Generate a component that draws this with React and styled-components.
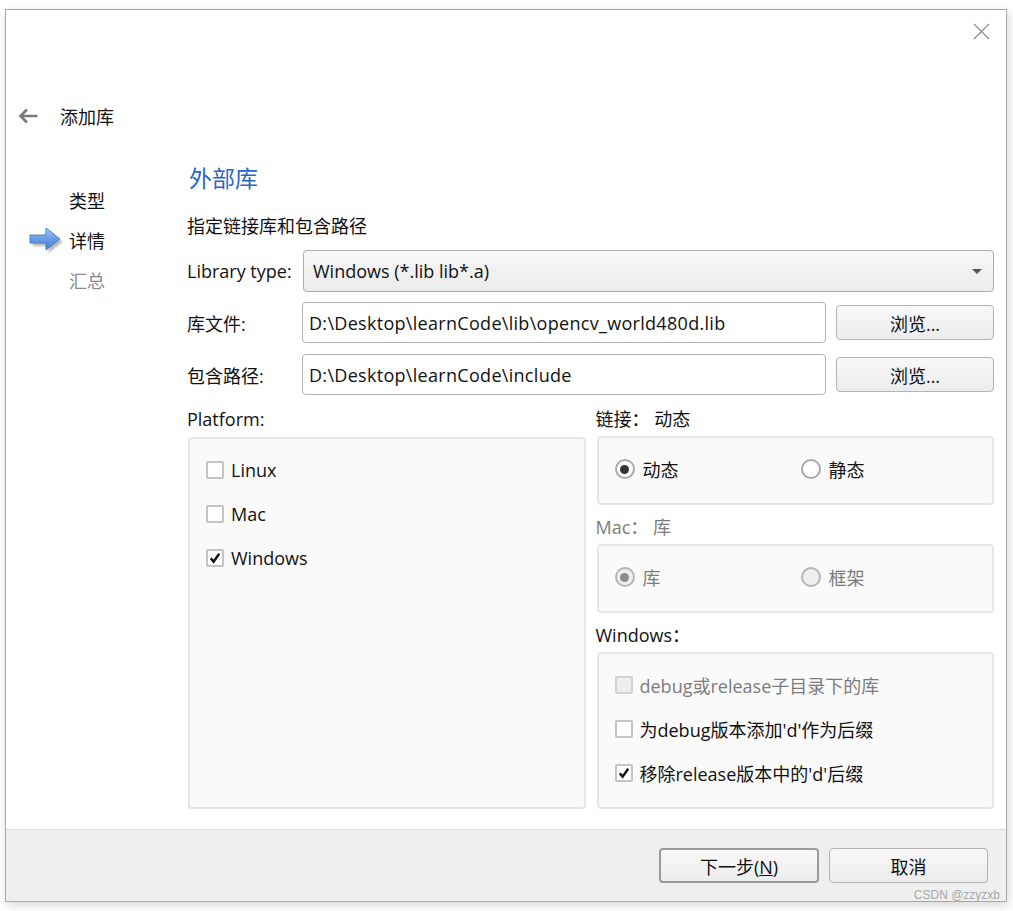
import React from 'react';
import styled, { createGlobalStyle } from 'styled-components';

const GlobalStyle = createGlobalStyle`
  body {
    margin: 0;
    background: #fff;
    font-family: "Open Sans", "Noto Sans CJK SC", sans-serif;
    font-size: 18px;
    color: #111;
  }
`;

const Page = styled.div`
  position: relative;
  width: 1013px;
  height: 911px;
  box-sizing: border-box;
  padding: 9px 0 0 5px;
`;

const Window = styled.div`
  width: 1002px;
  height: 893px;
  box-sizing: border-box;
  border: 1px solid #a8a8a8;
  background: #fff;
  display: flex;
  flex-direction: column;
  box-shadow: 2px 3px 9px rgba(0, 0, 0, 0.16);
`;

const Body = styled.div`
  flex: 1;
  display: flex;
  flex-direction: column;
  padding: 0 12px 20px 0;
  min-height: 0;
`;

const TopBar = styled.div`
  display: flex;
  justify-content: flex-end;
  padding: 13px 4px 0 0;
  height: 16px;
`;

const TitleRow = styled.div`
  display: flex;
  align-items: center;
  gap: 22px;
  height: 24px;
  margin-top: 65px;
  padding-left: 12px;
  font-size: 18px;
`;

const Main = styled.div`
  flex: 1;
  display: grid;
  grid-template-columns: 181px 1fr;
  margin-top: 36px;
  min-height: 0;
`;

const Nav = styled.div`
  padding: 16px 0 0 24px;
  display: flex;
  flex-direction: column;
`;

const NavItem = styled.div`
  display: grid;
  grid-template-columns: 39px auto;
  align-items: center;
  height: 40px;
  font-size: 18px;
  color: ${p => (p.muted ? '#8a8a8a' : '#111')};
`;

const Content = styled.div`
  display: flex;
  flex-direction: column;
  min-height: 0;
`;

const Heading = styled.div`
  font-size: 23px;
  line-height: 28px;
  color: #2a66c4;
  padding-left: 2px;
`;

const Subtitle = styled.div`
  font-size: 18px;
  line-height: 24px;
  margin-top: 22px;
`;

const FormRow = styled.div`
  display: flex;
  align-items: center;
  margin-top: ${p => p.gap || 10}px;
`;

const Label = styled.div`
  width: 115px;
  flex: none;
`;

const Select = styled.div`
  flex: 1;
  height: 42px;
  box-sizing: border-box;
  border: 1px solid #adadad;
  border-radius: 4px;
  background: linear-gradient(#f7f7f7, #ececec);
  display: flex;
  align-items: center;
  justify-content: space-between;
  padding: 0 11px 0 9px;
  margin-left: 1px;
`;

const Caret = styled.span`
  width: 0;
  height: 0;
  border-left: 5.5px solid transparent;
  border-right: 5.5px solid transparent;
  border-top: 5px solid #555;
`;

const Input = styled.div`
  flex: 1;
  height: 41px;
  box-sizing: border-box;
  border: 1px solid #b3b3b3;
  border-radius: 4px;
  background: #fff;
  display: flex;
  align-items: center;
  padding-left: 6px;
  white-space: nowrap;
  letter-spacing: 0.3px;
`;

const Button = styled.div`
  width: ${p => p.w || 158}px;
  height: ${p => p.h || 35}px;
  flex: none;
  box-sizing: border-box;
  border: ${p => (p.primary ? '2px solid #9a9a9a' : '1.5px solid #b4b4b4')};
  border-radius: 4px;
  background: linear-gradient(#f8f8f8, #ececec);
  display: flex;
  align-items: center;
  justify-content: center;
  margin-left: ${p => p.ml || 0}px;
`;

const Columns = styled.div`
  flex: 1;
  display: grid;
  grid-template-columns: 1fr 1fr;
  column-gap: 10px;
  margin-top: 13px;
  min-height: 0;
`;

const Column = styled.div`
  display: flex;
  flex-direction: column;
  min-height: 0;
`;

const GroupLabel = styled.div`
  height: 22px;
  line-height: 22px;
  color: ${p => (p.muted ? '#7c7c7c' : '#111')};
  margin-top: ${p => p.mt || 0}px;
`;

const GroupBox = styled.div`
  box-sizing: border-box;
  margin: ${p => p.mt || 6}px 0 0 1px;
  height: ${p => (p.h ? `${p.h}px` : 'auto')};
  flex: ${p => (p.h ? 'none' : 1)};
  background: #fafafa;
  border: 2px solid #e6e6e6;
  border-radius: 4px;
  padding: ${p => p.pt || 20}px 0 0 16px;
  display: flex;
  flex-direction: ${p => (p.row ? 'row' : 'column')};
  align-items: ${p => (p.row ? 'flex-start' : 'stretch')};
`;

const CheckRow = styled.div`
  display: flex;
  align-items: center;
  gap: 7px;
  height: 22px;
  margin-bottom: 22px;
  color: ${p => (p.disabled ? '#7c7c7c' : '#111')};
`;

const Box = styled.span`
  width: 18px;
  height: 18px;
  box-sizing: border-box;
  border: 2px solid ${p => (p.disabled ? '#d2d2d2' : '#c4c4c4')};
  border-radius: 2px;
  background: ${p => (p.disabled ? '#eeeeee' : '#fff')};
  display: flex;
  align-items: center;
  justify-content: center;
`;

const RadioItem = styled.div`
  display: flex;
  align-items: center;
  gap: 8px;
  height: 22px;
  width: ${p => p.w || 'auto'};
  color: ${p => (p.disabled ? '#7c7c7c' : '#111')};
`;

const RadioCircle = styled.span`
  width: 20px;
  height: 20px;
  box-sizing: border-box;
  border-radius: 50%;
  border: 2px solid ${p => (p.disabled ? '#b5b5b5' : '#a8a8a8')};
  background: ${p => (p.disabled ? '#efefef' : '#fff')};
  display: flex;
  align-items: center;
  justify-content: center;
  &::after {
    content: '';
    display: ${p => (p.checked ? 'block' : 'none')};
    width: 9px;
    height: 9px;
    border-radius: 50%;
    background: ${p => (p.disabled ? '#8c8c8c' : '#333')};
  }
`;

const Footer = styled.div`
  height: 72px;
  flex: none;
  box-sizing: border-box;
  border-top: 1px solid #dadada;
  background: #efefef;
  display: flex;
  justify-content: flex-end;
  align-items: flex-start;
  gap: 10px;
  padding: 18px 18px 0 0;
`;

const Underline = styled.span`
  text-decoration: underline;
`;

const Watermark = styled.div`
  position: absolute;
  right: 13px;
  bottom: 9px;
  font-family: "Liberation Sans", Arial, sans-serif;
  font-size: 12px;
  color: #a9a9a9;
`;

const CloseIcon = () => (
  <svg width="17" height="17" viewBox="0 0 17 17">
    <path d="M1 1L16 16M16 1L1 16" stroke="#8a8a8a" strokeWidth="1.1" fill="none" />
  </svg>
);

const BackArrow = () => (
  <svg width="20" height="16" viewBox="0 0 20 16">
    <path d="M19.5 8H2.5M9 1.5L2.5 8L9 14.5" stroke="#7a7a7a" strokeWidth="2.6" fill="none" />
  </svg>
);

const StepArrow = () => (
  <svg width="36" height="30" viewBox="0 0 36 30" style={{ marginLeft: -2 }}>
    <defs>
      <linearGradient id="ag" x1="0" y1="0" x2="0" y2="1">
        <stop offset="0" stopColor="#a9ccf5" />
        <stop offset="0.45" stopColor="#6da2e6" />
        <stop offset="1" stopColor="#3f78cf" />
      </linearGradient>
      <filter id="sh" x="-20%" y="-20%" width="150%" height="160%">
        <feGaussianBlur stdDeviation="1.2" />
      </filter>
    </defs>
    <path d="M3 11H19V4L33 15L19 26V19H3Z" fill="#000" opacity="0.28" filter="url(#sh)" transform="translate(1.5 2)" />
    <path d="M2 10H18V3L32 14L18 25V18H2Z" fill="url(#ag)" stroke="#4d7fc4" strokeWidth="1" strokeLinejoin="round" />
  </svg>
);

const CheckMark = () => (
  <svg width="12" height="12" viewBox="0 0 12 12">
    <path d="M1.8 6.2L4.6 9.8L10.2 1.8" stroke="#111" strokeWidth="2.4" fill="none" />
  </svg>
);

const Checkbox = ({ checked, disabled, children }) => (
  <CheckRow disabled={disabled}>
    <Box disabled={disabled}>{checked && <CheckMark />}</Box>
    <span>{children}</span>
  </CheckRow>
);

const Radio = ({ checked, disabled, w, children }) => (
  <RadioItem disabled={disabled} w={w}>
    <RadioCircle checked={checked} disabled={disabled} />
    <span>{children}</span>
  </RadioItem>
);

export default function App() {
  return (
    <Page>
      <GlobalStyle />
      <Window>
        <Body>
          <TopBar>
            <CloseIcon />
          </TopBar>
          <TitleRow>
            <BackArrow />
            <span>添加库</span>
          </TitleRow>
          <Main>
            <Nav>
              <NavItem>
                <span />
                <span>类型</span>
              </NavItem>
              <NavItem>
                <StepArrow />
                <span>详情</span>
              </NavItem>
              <NavItem muted>
                <span />
                <span>汇总</span>
              </NavItem>
            </Nav>
            <Content>
              <Heading>外部库</Heading>
              <Subtitle>指定链接库和包含路径</Subtitle>
              <FormRow gap={12}>
                <Label>Library type:</Label>
                <Select>
                  <span>Windows (*.lib lib*.a)</span>
                  <Caret />
                </Select>
              </FormRow>
              <FormRow gap={10}>
                <Label>库文件:</Label>
                <Input>D:\Desktop\learnCode\lib\opencv_world480d.lib</Input>
                <Button ml={10}>浏览...</Button>
              </FormRow>
              <FormRow gap={11}>
                <Label>包含路径:</Label>
                <Input>D:\Desktop\learnCode\include</Input>
                <Button ml={10}>浏览...</Button>
              </FormRow>
              <Columns>
                <Column>
                  <GroupLabel>Platform:</GroupLabel>
                  <GroupBox mt={7}>
                    <Checkbox>Linux</Checkbox>
                    <Checkbox>Mac</Checkbox>
                    <Checkbox checked>Windows</Checkbox>
                  </GroupBox>
                </Column>
                <Column>
                  <GroupLabel>链接：&nbsp;动态</GroupLabel>
                  <GroupBox h={69} row>
                    <Radio checked w="186px">动态</Radio>
                    <Radio>静态</Radio>
                  </GroupBox>
                  <GroupLabel muted mt={11}>Mac：&nbsp;库</GroupLabel>
                  <GroupBox h={69} row>
                    <Radio checked disabled w="186px">库</Radio>
                    <Radio disabled>框架</Radio>
                  </GroupBox>
                  <GroupLabel mt={11}>Windows：</GroupLabel>
                  <GroupBox>
                    <Checkbox disabled>debug或release子目录下的库</Checkbox>
                    <Checkbox>为debug版本添加'd'作为后缀</Checkbox>
                    <Checkbox checked>移除release版本中的'd'后缀</Checkbox>
                  </GroupBox>
                </Column>
              </Columns>
            </Content>
          </Main>
        </Body>
        <Footer>
          <Button primary w={160}>
            <span>
              下一步(<Underline>N</Underline>)
            </span>
          </Button>
          <Button w={159}>取消</Button>
        </Footer>
      </Window>
      <Watermark>CSDN @zzyzxb</Watermark>
    </Page>
  );
}
